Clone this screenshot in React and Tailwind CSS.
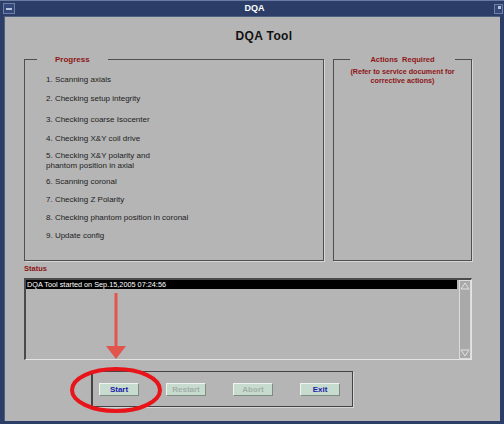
import React from "react";

const steps = [
  { text: "1. Scanning axials", mt: "mt-0" },
  { text: "2. Checking setup integrity", mt: "mt-[9px]" },
  { text: "3. Checking coarse Isocenter", mt: "mt-[11px]" },
  { text: "4. Checking X&Y coil drive", mt: "mt-[9px]" },
  { text: "5. Checking X&Y polarity and\nphantom position in axial", mt: "mt-[7px]" },
  { text: "6. Scanning coronal", mt: "mt-[6px]" },
  { text: "7. Checking Z Polarity", mt: "mt-[8px]" },
  { text: "8. Checking phantom position in coronal", mt: "mt-[8px]" },
  { text: "9. Update config", mt: "mt-[8px]" },
];

// dialog button, disabled ones get grey text
function DlgButton({ label, disabled }) {
  return (
    <button
      className={
        "w-[40px] h-[13px] bg-[#c7dccf] border border-t-[#eef5f0] border-l-[#eef5f0] border-b-[#7d8b82] border-r-[#7d8b82] text-[8px] font-bold leading-none " +
        (disabled ? "text-[#a3aea7]" : "text-[#1a1aa8]")
      }
    >
      {label}
    </button>
  );
}

export default function App() {
  return (
    <div
      className="relative w-[504px] h-[424px] flex flex-col bg-[#2c3d68] border-t border-[#6a7ca4] px-[4px] pb-[3px]"
      style={{ fontFamily: '"Liberation Sans", Arial, sans-serif' }}
    >
      {/* title bar */}
      <div className="h-[15px] flex items-center justify-between">
        <div className="w-[12px] h-[11px] ml-[-1px] border border-[#6f80a6] bg-[#34487a] flex items-center justify-center">
          <div className="w-[6px] h-[2px] bg-[#b8c2d8]" />
        </div>
        <span className="text-white text-[9px] font-bold leading-none">DQA</span>
        <div className="w-[9px] h-[10px] mr-[-3px] border border-[#6f80a6] bg-[#34487a] flex items-start justify-end">
          <div className="w-[3px] h-[3px] bg-[#b8c2d8] mt-[1px] mr-[1px]" />
        </div>
      </div>

      {/* window body */}
      <div className="flex-1 bg-[#b5b5b5] border-t border-l border-[#50607f] pl-[19px] pr-[28px] flex flex-col">
        <h1 className="mt-[11px] h-[16px] pl-[32px] text-center text-[12px] font-bold leading-[16px] text-[#111] tracking-[0.4px]">
          DQA Tool
        </h1>

        <div className="mt-[10px] flex gap-[9px]">
          <fieldset className="w-[300px] h-[207px] border border-[#4f4f4f] shadow-[1px_1px_0_#d6d6d6] p-0 m-0">
            <legend className="ml-[12px] px-[18px] text-[8px] font-bold leading-[11px] text-[#8e1515]">
              Progress
            </legend>
            <div className="pl-[21px] pt-[10px] flex flex-col text-[8px] leading-[10px] text-[#222]">
              {steps.map((s) => (
                <div key={s.text} className={s.mt + " whitespace-pre-line"}>
                  {s.text}
                </div>
              ))}
            </div>
          </fieldset>

          <fieldset className="flex-1 h-[207px] border border-[#4f4f4f] shadow-[1px_1px_0_#d6d6d6] p-0 m-0">
            <legend className="mx-auto px-[20px] text-[7.5px] font-bold leading-[11px] text-[#8e1515]">
              Actions&nbsp; Required
            </legend>
            <div className="mt-[2px] text-center text-[7.2px] font-bold leading-[9px] text-[#8e1515]">
              (Refer to service document for
              <br />
              corrective actions)
            </div>
          </fieldset>
        </div>

        <div className="mt-[3px] text-[7.5px] font-bold leading-[10px] text-[#8e1515]">Status</div>

        {/* status list */}
        <div className="mt-[4px] h-[82px] flex border-t-2 border-l-2 border-t-[#4a4a4a] border-l-[#4a4a4a] border-b border-r border-b-[#e4e4e4] border-r-[#e4e4e4]">
          <div className="flex-1">
            <div className="h-[9px] bg-black text-white text-[7.3px] leading-[9px] pl-[1px] whitespace-nowrap">
              DQA Tool started on Sep.15,2005 07:24:56
            </div>
          </div>
          <div className="w-[12px] ml-[2px] flex flex-col bg-[#a9a9a9] border border-[#dcdcdc]">
            <svg width="10" height="8" viewBox="0 0 10 8" className="mt-[1px]">
              <path d="M5 1 L9 7 L1 7 Z" fill="none" stroke="#e2e2e2" strokeWidth="1" />
            </svg>
            <div className="flex-1" />
            <svg width="10" height="8" viewBox="0 0 10 8" className="mb-[1px]">
              <path d="M1 1 L9 1 L5 7 Z" fill="none" stroke="#e2e2e2" strokeWidth="1" />
            </svg>
          </div>
        </div>

        {/* button panel */}
        <div className="mt-[11px] ml-[67px] w-[262px] h-[36px] flex items-center gap-[27px] pl-[6px] pt-[1px] border border-l-2 border-[#444] shadow-[1px_1px_0_#d6d6d6]">
          <DlgButton label="Start" />
          <DlgButton label="Restart" disabled />
          <DlgButton label="Abort" disabled />
          <DlgButton label="Exit" />
        </div>
      </div>

      {/* red annotation drawn over the screenshot */}
      <svg className="absolute inset-0 pointer-events-none" width="504" height="424" viewBox="0 0 504 424">
        <line x1="116" y1="292" x2="116" y2="348" stroke="#e2554d" strokeWidth="3" />
        <path d="M106 345 L126 345 L116 358 Z" fill="#e2554d" />
        <ellipse cx="116" cy="389" rx="44" ry="21" fill="none" stroke="#e8141a" strokeWidth="4" />
      </svg>
    </div>
  );
}
